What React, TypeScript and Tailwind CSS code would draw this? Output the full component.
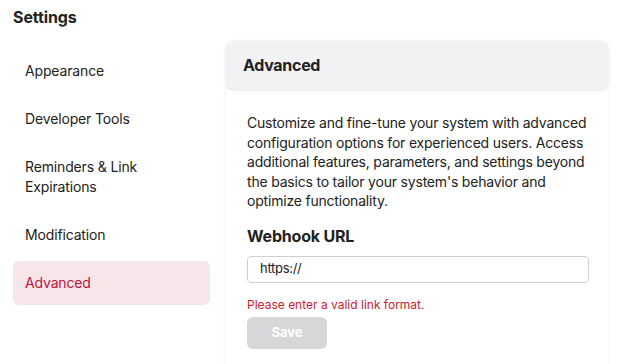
import React from "react";

const items = ["Appearance", "Developer Tools", "Reminders & Link Expirations", "Modification", "Advanced"];

export default function App() {
  return (
    <div className="w-[622px] h-[364px] overflow-hidden bg-white font-['Inter',sans-serif] text-[#222]">
      <h1 className="px-[13px] pt-[7px] text-[16px] font-bold leading-[20px] tracking-[-0.1px]">Settings</h1>
      <div className="flex items-start pl-[13px] mt-[14px]">
        <nav className="w-[197px] pt-[8px] flex flex-col gap-1">
          {items.map((it) => (
            <div
              key={it}
              className={
                it === "Advanced"
                  ? "px-3 py-3 rounded-md text-[14px] leading-[20px] tracking-[-0.15px] bg-[#f6e6e9] text-[#c0123c]"
                  : "px-3 py-3 rounded-md text-[14px] leading-[20px] tracking-[-0.15px] text-[#222]"
              }
            >
              {it === "Reminders & Link Expirations" ? (
                <>
                  Reminders &amp; Link
                  <br />
                  Expirations
                </>
              ) : (
                it
              )}
            </div>
          ))}
        </nav>
        <main className="ml-4 w-[382px] flex flex-col">
          <div className="relative z-10 h-[48px] rounded-lg bg-[#f2f2f4] shadow-[0_1px_4px_rgba(0,0,0,0.12)] px-[17px] flex items-center text-[16px] font-bold tracking-[-0.3px]">
            Advanced
          </div>
          <div className="h-[300px] px-[21px] pt-[24px] shadow-[0_0_4px_rgba(0,0,0,0.07)]">
            <p className="text-[14px] leading-[19.5px] tracking-[-0.2px] text-[#222]">
              Customize and fine-tune your system with advanced configuration options for experienced users. Access
              additional features, parameters, and settings beyond the basics to tailor your system's behavior and
              optimize functionality.
            </p>
            <h2 className="mt-[13px] text-[16px] font-bold leading-[24px] tracking-[-0.2px]">Webhook URL</h2>
            <div className="mt-2 w-[342px] h-[27px] rounded border border-[#cfcfcf] flex items-center px-3 text-[13px] tracking-[-0.3px] text-[#222]">
              https://
            </div>
            <p className="mt-[14px] text-[12px] leading-[16px] text-[#d0192f]">Please enter a valid link format.</p>
            <button className="mt-1 w-[80px] h-[32px] rounded-md bg-[#d6d7d9] text-white text-[13px] font-bold">
              Save
            </button>
          </div>
        </main>
      </div>
    </div>
  );
}
